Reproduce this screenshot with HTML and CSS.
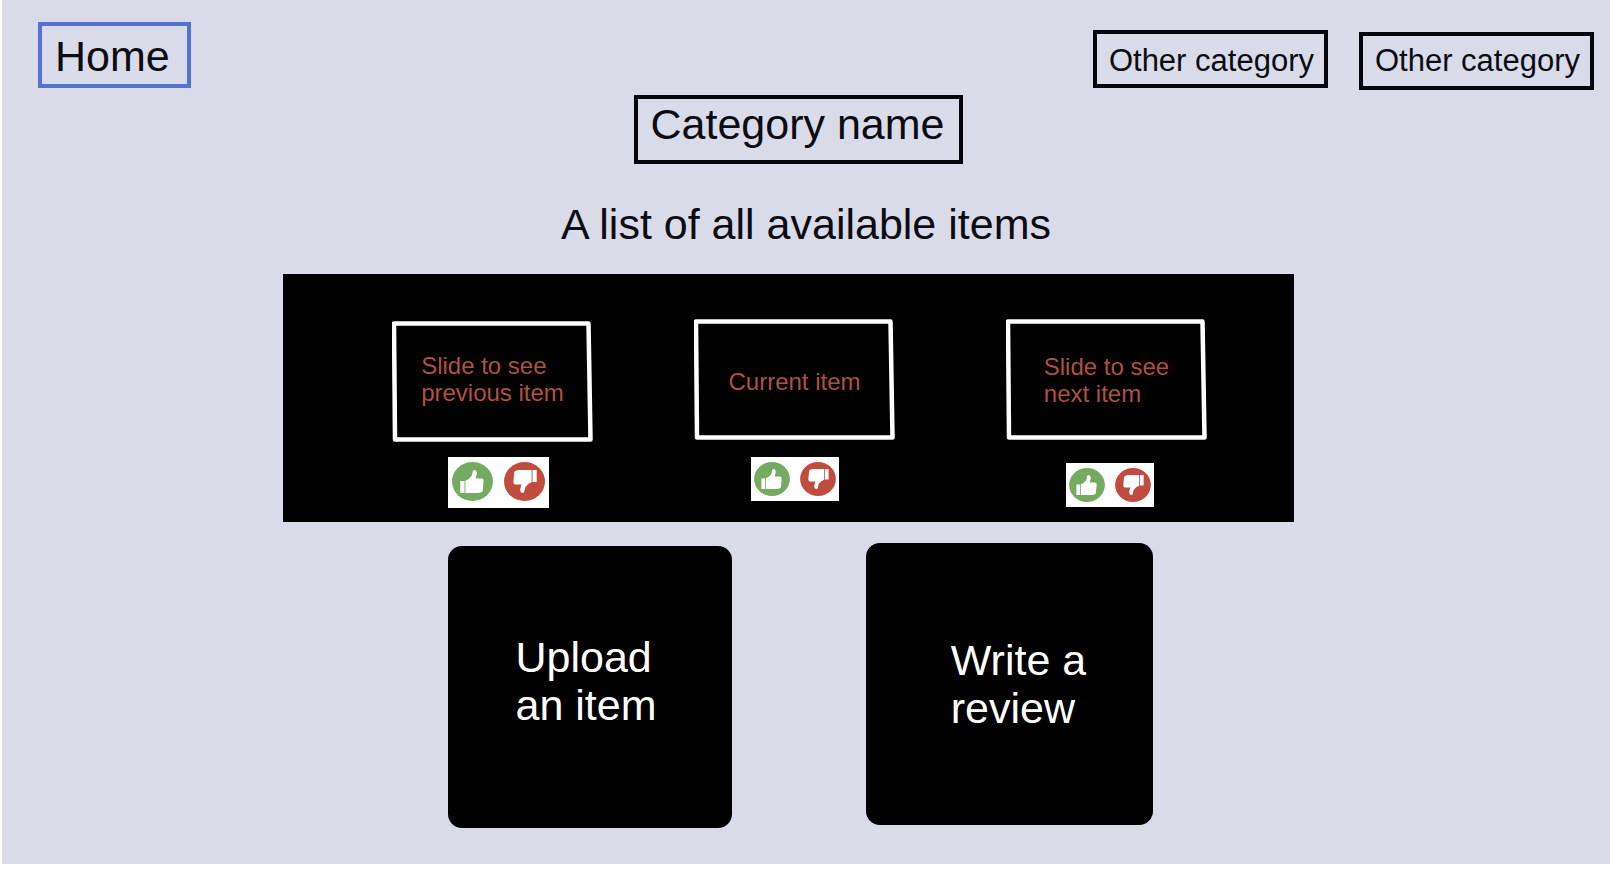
FILE: index.html
```html
<!DOCTYPE html>
<html lang="en">
<head>
<meta charset="utf-8">
<meta name="viewport" content="width=device-width, initial-scale=1">
<title>Category name</title>
<link rel="stylesheet" href="styles.css">
</head>
<body>
<svg class="defs" aria-hidden="true">
  <symbol id="thumb" viewBox="0 0 41 39">
    <path fill="#fff" d="M8.3 19h4.2v12H8.3z"/>
    <path fill="#fff" d="M13.4 18.7l3-1.400 3.200-3.200 1.400-5.400q1.300-1.200 2.800-.2 1.400 1.400 1 3.600l-1.300 4.400h6.200q1.800.2 1.900 2l-.8 9.800q-.3 1.800-2 2.200l-3 .5h-12.400z"/>
  </symbol>
  <symbol id="like" viewBox="0 0 41 39">
    <ellipse cx="20.500" cy="19.500" rx="20.500" ry="19.500" fill="#74ab60"/>
    <use href="#thumb" width="41" height="39"/>
  </symbol>
  <symbol id="dislike" viewBox="0 0 41 39">
    <ellipse cx="20.500" cy="19.500" rx="20.500" ry="19.500" fill="#c04c40"/>
    <g transform="rotate(180 20.5 19.5)"><use href="#thumb" width="41" height="39"/></g>
  </symbol>
  <symbol id="frame" viewBox="0 0 201 122" preserveAspectRatio="none">
    <path d="M2 2.500H196.500L198.500 119.500H3z" fill="none" stroke="#fff" stroke-width="4.500" stroke-linejoin="round"/>
  </symbol>
</svg>
<div class="page">
  <header class="topbar">
    <a class="box home" href="#">Home</a>
    <nav class="categories" aria-label="Categories">
      <a class="box category" href="#">Other category</a>
      <a class="box category category-last" href="#">Other category</a>
    </nav>
  </header>
  <main>
    <div class="title-row">
      <h1 class="box title">Category name</h1>
    </div>
    <h2 class="subtitle">A list of all available items</h2>
    <section class="carousel-row" aria-label="Items">
      <div class="carousel">
        <div class="item item-previous">
          <button class="slide" type="button"><svg class="frame" aria-hidden="true"><use href="#frame"/></svg><span>Slide to see<br>previous item</span></button>
          <div class="votes votes-large">
            <button class="vote" type="button" aria-label="Like"><svg><use href="#like"/></svg></button>
            <button class="vote" type="button" aria-label="Dislike"><svg><use href="#dislike"/></svg></button>
          </div>
        </div>
        <div class="item item-current">
          <button class="slide" type="button"><svg class="frame" aria-hidden="true"><use href="#frame"/></svg><span>Current item</span></button>
          <div class="votes">
            <button class="vote" type="button" aria-label="Like"><svg><use href="#like"/></svg></button>
            <button class="vote" type="button" aria-label="Dislike"><svg><use href="#dislike"/></svg></button>
          </div>
        </div>
        <div class="item item-next">
          <button class="slide" type="button"><svg class="frame" aria-hidden="true"><use href="#frame"/></svg><span>Slide to see<br>next item</span></button>
          <div class="votes">
            <button class="vote" type="button" aria-label="Like"><svg><use href="#like"/></svg></button>
            <button class="vote" type="button" aria-label="Dislike"><svg><use href="#dislike"/></svg></button>
          </div>
        </div>
      </div>
    </section>
    <section class="actions" aria-label="Actions">
      <button class="action upload" type="button"><span>Upload<br>an item</span></button>
      <button class="action review" type="button"><span>Write a<br>review</span></button>
    </section>
  </main>
</div>
</body>
</html>
```
FILE: styles.css
```css
* {
  box-sizing: border-box;
}

body {
  margin: 0;
  background: #fff;
  color: #0b0c14;
  font-family: "Liberation Sans", Arial, Helvetica, sans-serif;
  font-size: 43px;
  line-height: 48px;
}

button {
  padding: 0;
  border: 0;
  background: none;
  font: inherit;
  text-align: left;
  cursor: pointer;
}

.defs {
  position: absolute;
  width: 0;
  height: 0;
}

.page {
  margin: 0 0 8px 2px;
  min-height: calc(100vh - 8px);
  background: #dadbe8;
}

.topbar {
  display: flex;
  justify-content: space-between;
  align-items: flex-start;
  padding: 22px 16px 5px 36px;
}

.box {
  border: 4px solid #05060c;
  color: inherit;
  font-weight: 400;
  text-decoration: none;
}

.home {
  padding: 6px 17px 4px 13px;
  border-color: #5571d4;
}

.categories {
  display: flex;
  align-items: flex-start;
  gap: 31px;
  padding-top: 8px;
}

.category {
  padding: 9px 10px 5px 12px;
  font-size: 31px;
  line-height: 36px;
}

.category-last {
  margin-top: 2px;
  padding: 7px 10px 7px 12px;
}

.title-row {
  display: flex;
  justify-content: center;
  padding-right: 16px;
}

.title {
  margin: 0;
  padding: 1px 14px 12px 13px;
  font-size: 43px;
}

.subtitle {
  margin: 36px 0 26px;
  font-size: 43px;
  font-weight: 400;
  text-align: center;
}

.carousel-row {
  display: grid;
  grid-template-columns: 281fr 1011fr 316fr;
}

.carousel {
  grid-column: 2;
  display: grid;
  grid-template-columns: 109fr 201fr 101fr 201fr 111fr 201fr 87fr;
  padding: 45px 0 14px;
  background: #000;
}

.item {
  display: flex;
  flex-direction: column;
  align-items: center;
}

.item-previous {
  grid-column: 2;
  padding-top: 2px;
}

.item-current {
  grid-column: 4;
}

.item-next {
  grid-column: 6;
}

.slide {
  display: flex;
  align-items: center;
  justify-content: center;
  position: relative;
  width: 100%;
  height: 121px;
  color: #b0503f;
  font-size: 24px;
  line-height: 27px;
}

.item-previous .slide {
  padding-bottom: 6px;
}

.item-current .slide {
  padding-top: 4px;
}

.frame {
  position: absolute;
  inset: 0;
  width: 100%;
  height: 100%;
}

.votes {
  display: flex;
  justify-content: space-between;
  align-items: flex-start;
  width: 88px;
  height: 44px;
  margin-top: 17px;
  padding: 5px 3px;
  background: #fff;
}

.votes-large {
  width: 101px;
  height: 51px;
  margin: 15px 0 0 12px;
  padding: 5px 4px;
}

.item-next .votes {
  margin: 23px 0 0 6px;
}

.vote svg {
  display: block;
  width: 36px;
  height: 34px;
}

.votes-large .vote svg {
  width: 41px;
  height: 39px;
}

.actions {
  display: grid;
  grid-template-columns: 446fr 284fr 134fr 287fr 457fr;
  align-items: start;
  padding: 21px 0 34px;
}

.action {
  display: flex;
  align-items: center;
  justify-content: center;
  height: 282px;
  border-radius: 14px;
  background: #000;
  color: #fff;
}

.upload {
  grid-column: 2;
  margin-top: 3px;
  padding: 0 8px 12px 0;
}

.review {
  grid-column: 4;
  padding-left: 18px;
}
```
